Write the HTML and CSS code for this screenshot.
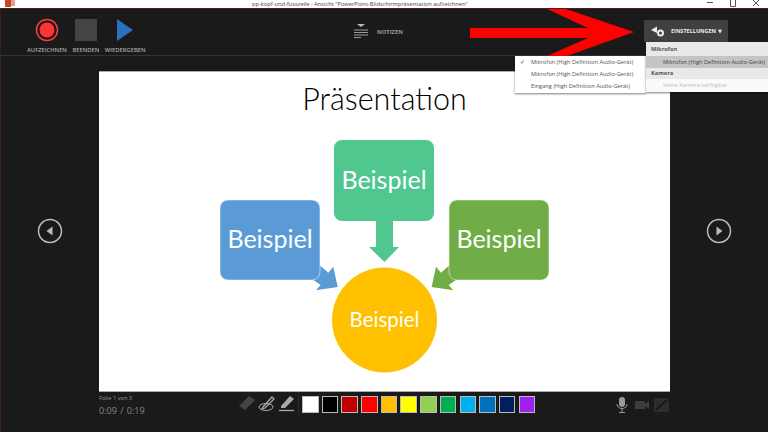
FILE: index.html
```html
<!DOCTYPE html>
<html lang="de">
  <head>
    <meta charset="UTF-8" />
    <title>PowerPoint-Bildschirmpräsentation aufzeichnen</title>
    <link rel="stylesheet" href="styles.css">
  </head>
  <body>
    <header class="titlebar">
      <svg class="app-icon" width="10" height="8" viewBox="0 0 10 8"><rect x="3" width="7" height="6" fill="#e8a090"/><rect width="6" height="7" fill="#c8452a"/></svg>
      <div class="window-title">pp-kopf-und-fusszeile - Ansicht "PowerPoint-Bildschirmpräsentation aufzeichnen"</div>
      <div class="window-controls">
        <svg width="8" height="8" viewBox="0 0 8 8"><path d="M1 2.5H7" stroke="#555"/></svg>
        <svg width="8" height="8" viewBox="0 0 8 8"><path d="M1.500 0V6.500H6.500V0" stroke="#555" fill="none"/></svg>
        <svg width="8" height="8" viewBox="0 0 8 8"><path d="M1 0L4 3L7 0M1 6L4 3L7 6" stroke="#555" fill="none"/></svg>
      </div>
    </header>

    <section class="toolbar">
      <div class="record-controls">
        <div class="tool">
          <svg width="24" height="24" viewBox="0 0 24 24"><circle cx="12" cy="12" r="10.500" fill="none" stroke="#ff3b3b" stroke-width="1.500"/><circle cx="12" cy="12" r="7.500" fill="#ff3333"/></svg>
          <span>AUFZEICHNEN</span>
        </div>
        <div class="tool">
          <svg width="24" height="24" viewBox="0 0 24 24"><rect x="1" y="1" width="22" height="22" fill="#444"/></svg>
          <span>BEENDEN</span>
        </div>
        <div class="tool">
          <svg width="24" height="24" viewBox="0 0 24 24"><path d="M4 1L20 12L4 23Z" fill="#2a70bb"/></svg>
          <span>WIEDERGEBEN</span>
        </div>
      </div>
      <div class="notes">
        <svg width="16" height="16" viewBox="0 0 16 16"><path d="M4 0H12L8 3Z" fill="#bbb"/><path d="M1 6H15M1 8.500H15M1 11H15M1 13.500H8" stroke="#999"/></svg>
        <span>NOTIZEN</span>
      </div>
      <div class="settings">
        <svg width="14" height="12" viewBox="0 0 14 12"><path d="M0 5L6 1.500V8Z" fill="#eee"/><circle cx="9.500" cy="8" r="2.500" fill="none" stroke="#eee" stroke-width="2"/></svg>
        <span>EINSTELLUNGEN</span>
        <span class="caret">▼</span>
      </div>
    </section>

    <main class="stage">
      <div class="nav-button nav-prev">
        <svg width="26" height="26" viewBox="0 0 26 26"><circle cx="13" cy="13" r="11.500" fill="none" stroke="#bbb" stroke-width="1.500"/><path d="M15.500 8.500V17.500L9.500 13Z" fill="#bbb"/></svg>
      </div>
      <div class="slide">
        <h1>Präsentation</h1>
        <svg class="diagram" width="571" height="321" viewBox="0 0 571 321">
          <path d="M277 150H294V176H300L285.500 191L270 176H277Z" fill="#4fc78f"/>
          <path d="M215 195H221.700L229.300 201.700L234.300 195.700L238.700 216L217 219.300L221.700 214L214.300 209Z" fill="#5b9bd5"/>
          <path d="M356 195H349.600L342 201.700L337 195.700L332.600 216L354.300 219.300L349.600 214L357 209Z" fill="#70ad47"/>
          <rect x="235" y="69" width="100" height="81" rx="8" fill="#4fc78f"/>
          <rect x="121" y="129" width="100" height="80" rx="8" fill="#5b9bd5" stroke="#fff" stroke-width="0.500"/>
          <rect x="350" y="129" width="100" height="80" rx="8" fill="#70ad47" stroke="#fff" stroke-width="0.500"/>
          <circle cx="285.500" cy="249" r="52.500" fill="#ffc000"/>
          <text x="285" y="118" class="label">Beispiel</text>
          <text x="171" y="177" class="label">Beispiel</text>
          <text x="400" y="177" class="label">Beispiel</text>
          <text x="285.500" y="256" class="label small">Beispiel</text>
        </svg>
      </div>
      <div class="nav-button nav-next">
        <svg width="26" height="26" viewBox="0 0 26 26"><circle cx="13" cy="13" r="11.500" fill="none" stroke="#bbb" stroke-width="1.500"/><path d="M10.500 8.500V17.500L16.500 13Z" fill="#bbb"/></svg>
      </div>
    </main>

    <footer class="bottom-bar">
      <div class="progress">
        <div class="slide-count">Folie 1 von 3</div>
        <div class="timer">0:09 / 0:19</div>
      </div>
      <div class="pens">
        <svg width="18" height="17" viewBox="0 0 18 17"><path d="M1 11L11 1L17 5L7 15Z" fill="#444"/></svg>
        <svg width="18" height="17" viewBox="0 0 18 17"><path d="M5 12L14 2L16 4L7 13L4 14Z" fill="none" stroke="#aaa" stroke-width="1.300"/><ellipse cx="8" cy="12" rx="7" ry="3.500" fill="none" stroke="#aaa"/></svg>
        <svg width="18" height="17" viewBox="0 0 18 17"><path d="M3 11L12 1L16 4L7 13L3 13Z" fill="#aaa"/><path d="M1 15.500H16" stroke="#aaa" stroke-width="1.300"/></svg>
      </div>
      <div class="swatches">
        <span class="swatch" style="background: #ffffff"></span>
        <span class="swatch" style="background: #000000"></span>
        <span class="swatch" style="background: #c00000"></span>
        <span class="swatch" style="background: #ff0000"></span>
        <span class="swatch" style="background: #ffc000"></span>
        <span class="swatch" style="background: #ffff00"></span>
        <span class="swatch" style="background: #92d050"></span>
        <span class="swatch" style="background: #00b050"></span>
        <span class="swatch" style="background: #00b0f0"></span>
        <span class="swatch" style="background: #0070c0"></span>
        <span class="swatch" style="background: #002060"></span>
        <span class="swatch" style="background: #a020f0"></span>
      </div>
      <div class="media">
        <svg width="14" height="16" viewBox="0 0 14 16"><rect x="4" y="0" width="6" height="10" rx="3" fill="#999"/><path d="M2 7C2 13 12 13 12 7M7 12V15M4 15.500H10" stroke="#999" fill="none"/></svg>
        <svg width="16" height="14" viewBox="0 0 16 14"><rect x="1" y="3" width="10" height="8" fill="#3d3d3d"/><path d="M11 6L15 3V11L11 8Z" fill="#3d3d3d"/></svg>
        <svg width="15" height="14" viewBox="0 0 15 14"><rect x="1" y="1" width="13" height="12" fill="#2c2c2c" stroke="#363636"/><path d="M2 12L13 2" stroke="#151515" stroke-width="1.500"/></svg>
      </div>
    </footer>

    <!-- annotation + open menus lie over the ui -->
    <svg class="red-arrow" width="166" height="48" viewBox="0 0 166 48"><path d="M0 19H118L77 0H96L164 23L97 47H77L118 29H0Z" fill="#ff0000"/></svg>

    <div class="menu device-menu">
      <div class="menu-row checked">Mikrofon (High Definition Audio-Gerät)</div>
      <div class="menu-row">Mikrofon (High Definition Audio-Gerät)</div>
      <div class="menu-row">Eingang (High Definition Audio-Gerät)</div>
    </div>

    <div class="menu settings-menu">
      <div class="menu-head">Mikrofon</div>
      <div class="menu-row selected">Mikrofon (High Definition Audio-Gerät)</div>
      <div class="menu-head short">Kamera</div>
      <div class="menu-row disabled">Keine Kamera verfügbar.</div>
    </div>
  </body>
</html>
```

FILE: styles.css
```css
body {
  margin: 0;
  width: 768px;
  height: 432px;
  position: relative;
  overflow: hidden;
  display: flex;
  flex-direction: column;
  background: #1a1a1a;
  box-shadow: inset 1px 0 0 #3a1f1a;
  font-family: "Open Sans", sans-serif;
  color: #bbb;
}

.titlebar {
  height: 8px;
  flex: none;
  display: flex;
  align-items: flex-start;
  background: #fff;
  border-bottom: 1px solid #4a2020;
  padding-left: 5px;
  position: relative;
  z-index: 1;
}

.window-title {
  margin-left: 237px;
  font-size: 5.7px;
  line-height: 8px;
  white-space: nowrap;
  color: #444;
}

.window-controls {
  margin-left: auto;
  display: flex;
  gap: 15px;
  padding-right: 8px;
}

.toolbar {
  height: 46px;
  flex: none;
  display: flex;
  align-items: flex-start;
  border-bottom: 1px solid #333;
}

.record-controls {
  display: flex;
  gap: 5.5px;
  padding: 9px 0 0 27px;
  width: 331px;
  box-sizing: border-box;
}

.tool {
  display: flex;
  flex-direction: column;
  align-items: center;
  gap: 4px;
  font-size: 5.8px;
  line-height: 8px;
  font-weight: 600;
  color: #aaa;
}

.notes {
  display: flex;
  align-items: center;
  gap: 8px;
  padding-top: 15px;
  margin-left: 22px;
  font-size: 5.8px;
  font-weight: 700;
  color: #999;
}

.settings {
  margin-left: auto;
  margin-right: 40px;
  margin-top: 11px;
  width: 84px;
  height: 22px;
  box-sizing: border-box;
  display: flex;
  align-items: center;
  padding-left: 7px;
  background: #404040;
  font-size: 5.5px;
  font-weight: 700;
  color: #eee;
}

.settings svg {
  margin-right: 6px;
}

.caret {
  margin-left: 2px;
  font-size: 5px;
  font-family: "DejaVu Sans", sans-serif;
}

.stage {
  height: 322px;
  padding-top: 14px;
  flex: none;
  display: flex;
  align-items: center;
}

.nav-button {
  display: flex;
  justify-content: center;
}

.nav-prev {
  width: 99px;
}

.nav-next {
  width: 98px;
}

.slide {
  width: 571px;
  height: 321px;
  box-sizing: border-box;
  flex: none;
  position: relative;
  background: #fff;
  border-top: 1px solid #aaa;
  border-bottom: 1px solid #aaa;
}

.slide h1 {
  margin: 0;
  padding-top: 8px;
  text-align: center;
  font-family: Lato, sans-serif;
  font-size: 30.5px;
  font-weight: 300;
  color: #000;
}

.diagram {
  position: absolute;
  left: 0;
  top: -1px;
}

.label {
  font-family: Lato, sans-serif;
  font-size: 25px;
  fill: #fff;
  text-anchor: middle;
}

.label.small {
  font-size: 20.5px;
}

.bottom-bar {
  flex: 1;
  display: flex;
  align-items: flex-start;
  padding-left: 99px;
}

.progress {
  width: 139px;
  flex: none;
  padding-top: 2px;
}

.slide-count {
  font-size: 5.7px;
  line-height: 8px;
  color: #999;
}

.timer {
  font-size: 9px;
  line-height: 14px;
  margin-top: 2px;
  word-spacing: 1px;
  color: #888;
}

.pens {
  display: flex;
  gap: 2px;
  padding-top: 3px;
  padding-right: 2px;
  height: 20px;
  border-right: 1px solid #2a2a2a;
}

.swatches {
  display: flex;
  gap: 3.2px;
  padding-top: 4px;
  margin-left: 3px;
}

.swatch {
  width: 14.5px;
  height: 14.5px;
  border: 1px solid #bbb;
}

.media {
  display: flex;
  align-items: center;
  gap: 4.5px;
  padding-top: 5px;
  margin-left: 80px;
}

.red-arrow {
  position: absolute;
  left: 470px;
  top: 9px;
}

.menu {
  position: absolute;
  box-shadow: 0 1px 2px rgba(0, 0, 0, 0.5);
  font-size: 5.7px;
  color: #555;
}

.device-menu {
  left: 515px;
  top: 56px;
  width: 131px;
  height: 37px;
  background: #fff;
  padding-left: 16px;
  box-sizing: border-box;
}

.device-menu .menu-row {
  height: 12px;
  line-height: 12px;
  white-space: nowrap;
  position: relative;
}

.device-menu .checked::before {
  content: "✓";
  position: absolute;
  left: -11px;
  color: #333;
}

.settings-menu {
  left: 646px;
  top: 42px;
  width: 122px;
  height: 50px;
  background: #fafafa;
}

.menu-head {
  height: 14px;
  line-height: 14px;
  padding-left: 5px;
  background: #e9e9e9;
  font-weight: 700;
}

.menu-head.short {
  height: 11px;
  line-height: 11px;
}

.settings-menu .menu-row {
  height: 12px;
  line-height: 12px;
  padding-left: 17px;
  white-space: nowrap;
}

.selected {
  background: #c4c4c4;
  color: #444;
}

.disabled {
  color: #bbb;
}
```
